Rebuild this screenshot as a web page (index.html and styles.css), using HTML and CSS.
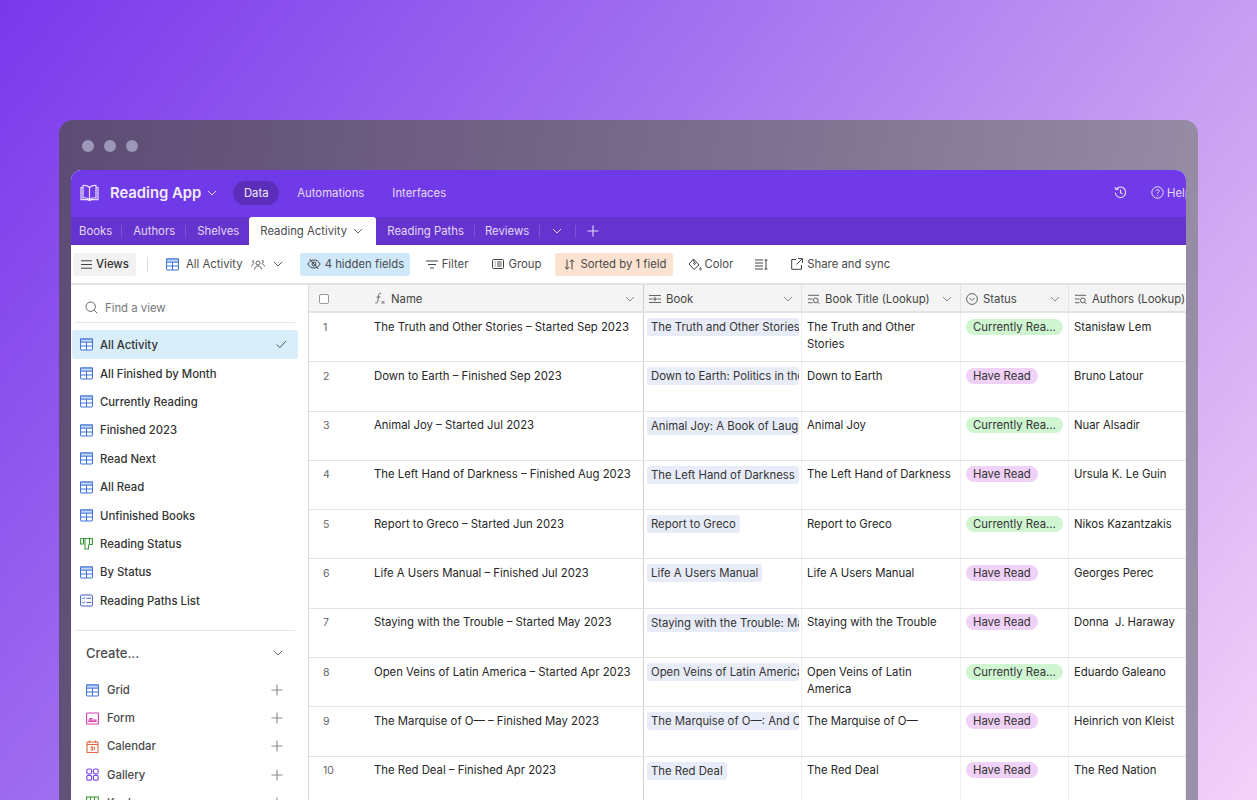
FILE: index.html
```html
<!DOCTYPE html>
<html lang="en">
<head>
<meta charset="utf-8">
<title>Reading App</title>
<link rel="stylesheet" href="styles.css">
</head>
<body>
<svg class="defs" width="0" height="0" aria-hidden="true">
  <symbol id="i-grid" viewBox="0 0 14 14"><rect x=".6" y="1.1" width="12.8" height="11.8" rx="1" fill="#fff" stroke="#3f73d9" stroke-width="1.1"/><rect x=".6" y="1.1" width="12.8" height="3.4" fill="#c3d6f7" stroke="#3f73d9" stroke-width="1.1"/><path d="M.6 8.6h12.8M7 4.5v8.4" stroke="#3f73d9" stroke-width="1.1" fill="none"/></symbol>
  <symbol id="i-chev" viewBox="0 0 10 10"><path d="M1 3l4 4 4-4" fill="none" stroke="currentColor" stroke-width="1"/></symbol>
  <symbol id="i-plus" viewBox="0 0 12 12"><path d="M6 .5v11M.5 6h11" fill="none" stroke="currentColor" stroke-width="1.1"/></symbol>
  <symbol id="i-lookup" viewBox="0 0 14 12"><path d="M1 2h12M1 6h5M1 10h5" fill="none" stroke="currentColor" stroke-width="1"/><circle cx="9.5" cy="7.5" r="2.6" fill="none" stroke="currentColor"/><path d="M11.4 9.4l1.8 1.8" stroke="currentColor"/></symbol>
</svg>
<main class="window">
  <div class="titlebar"><i class="dot"></i><i class="dot"></i><i class="dot"></i></div>
  <div class="app">
    <header class="topbar">
      <svg class="logo" width="19" height="18" viewBox="0 0 19 18" fill="none" stroke="#e9e0fb" stroke-width="1.2"><path d="M9.5 3.5C8 2 5.5 1.3 3 1.5v12.3c2.5-.2 5 .3 6.5 1.7 1.5-1.4 4-1.9 6.5-1.7V1.5C13.5 1.3 11 2 9.5 3.5zM9.5 3.5v12M3 3.5H1v12.2h6.5l2 1 2-1H18V3.5h-2"/></svg>
      <span class="brand">Reading App</span>
      <svg class="brand-chev" width="10" height="10"><use href="#i-chev"/></svg>
      <span class="nav nav-on">Data</span>
      <span class="nav nav-auto">Automations</span>
      <span class="nav nav-int">Interfaces</span>
      <span class="spring"></span>
      <svg class="hist" width="13" height="13" viewBox="0 0 13 13" fill="none" stroke="#e9e0fb" stroke-width="1.1"><path d="M2.3 3.2A5.2 5.2 0 1 1 1.3 6.5M.8 1.2l1.4 2.3 2.4-.8M6.5 3.5v3.2l2 1.3"/></svg>
      <svg class="help" width="13" height="13" viewBox="0 0 13 13" fill="none" stroke="#e9e0fb" stroke-width="1"><circle cx="6.5" cy="6.5" r="5.7"/><path d="M4.9 5.1c0-2.1 3.3-2.1 3.3-.1 0 1.3-1.7 1.3-1.7 2.8M6.5 9.1v.9"/></svg>
      <span class="help-t">Help</span>
    </header>
    <nav class="tabs">
      <span class="tab t-books">Books</span><i class="tsep"></i>
      <span class="tab t-auth">Authors</span><i class="tsep"></i>
      <span class="tab t-shelves">Shelves</span>
      <span class="tab-on">Reading Activity<svg class="tab-chev" width="10" height="10"><use href="#i-chev"/></svg></span>
      <span class="tab t-paths">Reading Paths</span><i class="tsep"></i>
      <span class="tab t-rev">Reviews</span><i class="tsep"></i>
      <svg class="tab-more" width="10" height="10"><use href="#i-chev"/></svg><i class="tsep"></i>
      <svg class="tab-plus" width="12" height="12"><use href="#i-plus"/></svg>
    </nav>
    <div class="toolbar">
      <span class="views"><svg width="11" height="9" viewBox="0 0 11 9" fill="none" stroke="#444" stroke-width="1"><path d="M0 .8h11M0 4.5h11M0 8.2h11"/></svg>Views</span>
      <i class="vsep"></i>
      <svg class="tb-grid" width="13" height="13"><use href="#i-grid"/></svg>
      <span class="tb allact">All Activity</span>
      <svg class="people" width="14" height="11" viewBox="0 0 14 11" fill="none" stroke="#555" stroke-width=".9"><circle cx="7" cy="4" r="2"/><path d="M3.5 10.5c.3-2.5 1.5-3.5 3.5-3.5s3.2 1 3.5 3.5M3 1.2a1.500 1.500 0 1 0 .5 3M11 1.2a1.500 1.500 0 1 1-.5 3M.5 7.500c.2-1.300.8-2 2-2.200M13.500 7.500c-.2-1.300-.8-2-2-2.200"/></svg>
      <svg class="all-chev" width="10" height="10"><use href="#i-chev"/></svg>
      <span class="chip chip-blue"><svg width="14" height="12" viewBox="0 0 14 12" fill="none" stroke="#444" stroke-width="1"><path d="M.8 6C2.5 3.2 4.6 2 7 2s4.5 1.2 6.2 4C11.5 8.8 9.4 10 7 10S2.5 8.8.8 6z"/><circle cx="7" cy="6" r="2"/><path d="M2.5 1l9 10"/></svg>4 hidden fields</span>
      <span class="tb tb-filter"><svg width="12" height="9" viewBox="0 0 12 9" fill="none" stroke="#444" stroke-width="1"><path d="M0 1h12M2 4.500h8M4 8h4"/></svg>Filter</span>
      <span class="tb tb-group"><svg width="12" height="10" viewBox="0 0 12 10" fill="none" stroke="#444" stroke-width="1"><rect x=".5" y=".5" width="11" height="9" rx="1"/><path d="M2.5 3h1M5 3h4.500M2.500 5h1M5 5h4.500M2.500 7h1M5 7h4.500"/></svg>Group</span>
      <span class="chip chip-orange"><svg width="11" height="11" viewBox="0 0 11 11" fill="none" stroke="#444" stroke-width="1"><path d="M3 .5v9.500M.8 8L3 10.200 5.200 8M8 10.500V1M5.800 3L8 .8 10.200 3"/></svg>Sorted by 1 field</span>
      <span class="tb tb-color"><svg width="14" height="13" viewBox="0 0 14 13" fill="none" stroke="#444" stroke-width="1"><path d="M5.5 1L1 6l5 5.500 5-4.500zM5 1.500l1.500 3"/><circle cx="6.5" cy="5.5" r=".9"/><path d="M12.5 9.5c.8 1 .8 2.500 0 2.500s-.8-1.500 0-2.500z"/></svg>Color</span>
      <svg class="tb-height" width="13" height="11" viewBox="0 0 13 11" fill="none" stroke="#444" stroke-width="1"><path d="M0 1h8M0 4h8M0 7h8M0 10h8M11 .5v10M9.500 1h3M9.500 10h3"/></svg>
      <span class="tb tb-share"><svg width="12" height="12" viewBox="0 0 12 12" fill="none" stroke="#444" stroke-width="1"><path d="M5 1.500H.7v9.800h9.800V7M7 .6h4.400V5M11.200.8L5.500 6.500"/></svg>Share and sync</span>
    </div>
    <div class="body">
      <aside class="sidebar">
        <div class="find"><svg width="13" height="13" viewBox="0 0 13 13" fill="none" stroke="#666" stroke-width="1"><circle cx="5.7" cy="5.7" r="4.7"/><path d="M9.2 9.2l3.2 3.2"/></svg>Find a view</div>
        <ul class="views-list">
          <li class="view view-on"><svg width="13" height="13"><use href="#i-grid"/></svg>All Activity<svg class="check" width="11" height="9" viewBox="0 0 11 9" fill="none" stroke="#555" stroke-width="1"><path d="M.8 4.5l3 3.2L10.200.8"/></svg></li>
          <li class="view"><svg width="13" height="13"><use href="#i-grid"/></svg>All Finished by Month</li>
          <li class="view"><svg width="13" height="13"><use href="#i-grid"/></svg>Currently Reading</li>
          <li class="view"><svg width="13" height="13"><use href="#i-grid"/></svg>Finished 2023</li>
          <li class="view"><svg width="13" height="13"><use href="#i-grid"/></svg>Read Next</li>
          <li class="view"><svg width="13" height="13"><use href="#i-grid"/></svg>All Read</li>
          <li class="view"><svg width="13" height="13"><use href="#i-grid"/></svg>Unfinished Books</li>
          <li class="view"><svg width="13" height="13" viewBox="0 0 13 13" fill="none" stroke="#3d9a3a" stroke-width="1.1"><path d="M.6 1.500h11.800v6H9.500v-6M.6 1.500v5.500h2.900v-5.500M3.500 1.500h6M5 1.500v10.500h3.500V7.500"/></svg>Reading Status</li>
          <li class="view"><svg width="13" height="13"><use href="#i-grid"/></svg>By Status</li>
          <li class="view"><svg width="13" height="13" viewBox="0 0 13 13" fill="none" stroke="#3f5fc9" stroke-width="1"><rect x=".6" y="1" width="11.8" height="11" rx="1"/><path d="M2.500 4l1 1 1.500-1.800M6.500 4.300h4.500M2.500 8.300l1 1L5 7.500M6.500 8.500h4.500"/></svg>Reading Paths List</li>
        </ul>
        <div class="create">
          <div class="create-h">Create...<svg width="10" height="10"><use href="#i-chev"/></svg></div>
          <ul class="create-list">
            <li class="cr"><svg width="13" height="13"><use href="#i-grid"/></svg>Grid<svg class="cr-plus" width="12" height="12"><use href="#i-plus"/></svg></li>
            <li class="cr"><svg width="13" height="13" viewBox="0 0 13 13" fill="none" stroke="#d53fb0" stroke-width="1.1"><rect x=".6" y="1" width="11.8" height="11" rx=".5"/><path d="M3 8h7v1.500H3zM4 8V6.500h2.500" fill="#f5b8e6"/></svg>Form<svg class="cr-plus" width="12" height="12"><use href="#i-plus"/></svg></li>
            <li class="cr"><svg width="13" height="13" viewBox="0 0 13 13" fill="none" stroke="#d9683a" stroke-width="1.1"><rect x="1" y="2" width="11" height="10.5" rx=".5"/><path d="M1 4.500h11M3.500.5v2.500M9.500.5v2.500M4.500 7h2v1h-1 1v2h-2M8.500 7v3"/></svg>Calendar<svg class="cr-plus" width="12" height="12"><use href="#i-plus"/></svg></li>
            <li class="cr"><svg width="13" height="13" viewBox="0 0 13 13" fill="none" stroke="#7c4be8" stroke-width="1.2"><rect x=".8" y="1" width="4.8" height="4.8" rx="1.5"/><rect x="7.4" y="1" width="4.8" height="4.8" rx="1.5"/><rect x=".8" y="7.4" width="4.8" height="4.8" rx="1.5"/><rect x="7.4" y="7.4" width="4.8" height="4.8" rx="1.5"/></svg>Gallery<svg class="cr-plus" width="12" height="12"><use href="#i-plus"/></svg></li>
            <li class="cr"><svg width="13" height="13" viewBox="0 0 13 13" fill="none" stroke="#3d9a3a" stroke-width="1.1"><rect x=".6" y="1" width="11.8" height="11"/><path d="M4.500 1v6M8.500 1v8"/></svg>Kanban<svg class="cr-plus" width="12" height="12"><use href="#i-plus"/></svg></li>
          </ul>
        </div>
      </aside>
      <section class="grid">
        <div class="g-head">
          <div class="h h-name"><i class="box"></i><svg class="fx" width="12" height="13" viewBox="0 0 12 13" fill="none" stroke="#555" stroke-width=".9"><path d="M7.500 1.500C6 1 5 1.800 4.800 3.500L4 9.500C3.800 11.200 2.800 12 1.300 11.500M2.800 5.300h4M8 9.500l3 3M11 9.500l-3 3" transform="scale(.95)"/></svg><span class="h-t">Name</span><svg class="h-chev" width="10" height="10"><use href="#i-chev"/></svg></div>
          <div class="h"><svg width="12" height="12" viewBox="0 0 12 12" fill="none" stroke="#555" stroke-width=".9"><path d="M0 2.500h12M0 6h3.500M8.500 6H12M6 3.800v4.400M3.800 6h4.400M0 9.500h12"/></svg><span class="h-t">Book</span><svg class="h-chev" width="10" height="10"><use href="#i-chev"/></svg></div>
          <div class="h"><svg width="13" height="12"><use href="#i-lookup"/></svg><span class="h-t">Book Title (Lookup)</span><svg class="h-chev" width="10" height="10"><use href="#i-chev"/></svg></div>
          <div class="h"><svg width="12" height="12" viewBox="0 0 12 12" fill="none" stroke="#555" stroke-width=".9"><circle cx="6" cy="6" r="5.4"/><path d="M3.500 5l2.500 2.500L8.500 5"/></svg><span class="h-t">Status</span><svg class="h-chev" width="10" height="10"><use href="#i-chev"/></svg></div>
          <div class="h h-last"><svg width="13" height="12"><use href="#i-lookup"/></svg><span class="h-t">Authors (Lookup)</span></div>
        </div>
        <div class="g-row"><div class="c c-name"><span class="num">1</span><span>The Truth and Other Stories – Started Sep 2023</span></div><div class="c"><span class="link">The Truth and Other Stories: Selected</span></div><div class="c c-text">The Truth and Other Stories</div><div class="c"><span class="pill green">Currently Reading</span></div><div class="c c-text">Stanisław Lem</div></div>
        <div class="g-row"><div class="c c-name"><span class="num">2</span><span>Down to Earth – Finished Sep 2023</span></div><div class="c"><span class="link">Down to Earth: Politics in the New</span></div><div class="c c-text">Down to Earth</div><div class="c"><span class="pill pink">Have Read</span></div><div class="c c-text">Bruno Latour</div></div>
        <div class="g-row"><div class="c c-name"><span class="num">3</span><span>Animal Joy – Started Jul 2023</span></div><div class="c"><span class="link">Animal Joy: A Book of Laughter</span></div><div class="c c-text">Animal Joy</div><div class="c"><span class="pill green">Currently Reading</span></div><div class="c c-text">Nuar Alsadir</div></div>
        <div class="g-row"><div class="c c-name"><span class="num">4</span><span>The Left Hand of Darkness – Finished Aug 2023</span></div><div class="c"><span class="link">The Left Hand of Darkness</span></div><div class="c c-text">The Left Hand of Darkness</div><div class="c"><span class="pill pink">Have Read</span></div><div class="c c-text">Ursula K. Le Guin</div></div>
        <div class="g-row"><div class="c c-name"><span class="num">5</span><span>Report to Greco – Started Jun 2023</span></div><div class="c"><span class="link">Report to Greco</span></div><div class="c c-text">Report to Greco</div><div class="c"><span class="pill green">Currently Reading</span></div><div class="c c-text">Nikos Kazantzakis</div></div>
        <div class="g-row"><div class="c c-name"><span class="num">6</span><span>Life A Users Manual – Finished Jul 2023</span></div><div class="c"><span class="link">Life A Users Manual</span></div><div class="c c-text">Life A Users Manual</div><div class="c"><span class="pill pink">Have Read</span></div><div class="c c-text">Georges Perec</div></div>
        <div class="g-row"><div class="c c-name"><span class="num">7</span><span>Staying with the Trouble – Started May 2023</span></div><div class="c"><span class="link">Staying with the Trouble: Making Kin</span></div><div class="c c-text">Staying with the Trouble</div><div class="c"><span class="pill pink">Have Read</span></div><div class="c c-text">Donna&nbsp; J. Haraway</div></div>
        <div class="g-row"><div class="c c-name"><span class="num">8</span><span>Open Veins of Latin America – Started Apr 2023</span></div><div class="c"><span class="link">Open Veins of Latin America: Five</span></div><div class="c c-text">Open Veins of Latin America</div><div class="c"><span class="pill green">Currently Reading</span></div><div class="c c-text">Eduardo Galeano</div></div>
        <div class="g-row"><div class="c c-name"><span class="num">9</span><span>The Marquise of O— – Finished May 2023</span></div><div class="c"><span class="link">The Marquise of O—: And Other Stories</span></div><div class="c c-text">The Marquise of O—</div><div class="c"><span class="pill pink">Have Read</span></div><div class="c c-text">Heinrich von Kleist</div></div>
        <div class="g-row"><div class="c c-name"><span class="num">10</span><span>The Red Deal – Finished Apr 2023</span></div><div class="c"><span class="link">The Red Deal</span></div><div class="c c-text">The Red Deal</div><div class="c"><span class="pill pink">Have Read</span></div><div class="c c-text">The Red Nation</div></div>
      </section>
    </div>
  </div>
</main>
</body>
</html>
```
FILE: styles.css
```css
* { box-sizing: border-box; }
html, body { margin: 0; height: 800px; overflow: hidden; }
body {
  padding: 120px 59px 0;
  font-family: Inter, "Liberation Sans", sans-serif;
  font-size: 11.33px;
  color: #333;
  background: linear-gradient(128deg, #7a38ec 0%, #a474f0 40%, #c9a2f2 70%, #f4d2f9 100%);
}
.defs { position: absolute; }
ul { list-style: none; margin: 0; padding: 0; }
i { display: block; font-style: normal; }
svg { flex: none; display: block; }

.window {
  width: 1139px;
  height: 680px;
  padding: 0 12px;
  border-radius: 14px 14px 0 0;
  background: linear-gradient(100deg, #5c4b74 0%, #7a6c8c 50%, #9b92a9 100%);
  overflow: hidden;
}
.titlebar { height: 50px; display: flex; align-items: center; gap: 10px; padding: 2px 0 0 11px; }
.dot { width: 12px; height: 12px; border-radius: 50%; background: #9a97b8; }

.app { width: 1115px; height: 630px; background: #fff; border-radius: 10px 10px 0 0; overflow: hidden; }

.topbar { height: 47px; background: #713ae8; color: #efe8fd; display: flex; align-items: center; padding: 0 0 2px 9px; white-space: nowrap; }
.brand { margin-left: 11px; font-size: 14.8px; font-weight: 600; color: #f2edfd; }
.brand-chev { margin-left: 6px; color: #e4d9fa; }
.nav { color: #e6dcfb; }
.nav-on { margin-left: 16px; width: 46px; height: 24px; line-height: 24px; text-align: center; border-radius: 12px; background: #5a2eb9; color: #f0eafd; }
.nav-auto { margin-left: 18px; }
.nav-int { margin-left: 28px; }
.spring { flex: 1; }
.hist { margin-right: 24px; }
.help { margin-right: 3px; }
.help-t { width: 19px; overflow: hidden; flex: none; color: #e6dcfb; }

.tabs { height: 28px; background: #6534cf; color: #e3d8fa; display: flex; align-items: center; border-bottom: 1px solid #5e30c4; padding-left: 8px; white-space: nowrap; }
.tsep { width: 1px; height: 12px; background: #7d55d8; }
.t-books { margin-right: 9px; }
.t-auth { margin: 0 10px 0 11px; }
.t-shelves { margin: 0 10px 0 11px; }
.tab-on { align-self: stretch; height: 28px; width: 127px; background: #fff; color: #4b4b4b; border-radius: 3px 3px 0 0; display: flex; align-items: center; padding-left: 11px; }
.tab-chev { margin-left: 6px; color: #666; }
.t-paths { margin: 0 10px 0 11px; }
.t-rev { margin: 0 10px; }
.tab-more { margin: 0 13px 0 12px; }
.tab-plus { margin-left: 11px; }

.toolbar { height: 40px; display: flex; align-items: center; padding-left: 2px; border-bottom: 2px solid #e3e3e3; color: #4a4a4a; white-space: nowrap; }
.tb { display: flex; align-items: center; gap: 4px; }
.views { width: 63px; height: 23px; background: #f2f2f2; border-radius: 3px; display: flex; align-items: center; gap: 4px; padding-left: 8px; color: #333; font-weight: 500; }
.vsep { width: 1px; height: 15px; background: #ddd; margin-left: 11px; }
.tb-grid { margin-left: 18px; }
.allact { margin-left: 7px; }
.people { margin-left: 8px; }
.all-chev { margin-left: 8px; color: #555; }
.chip { height: 23px; border-radius: 3px; display: flex; align-items: center; padding-left: 7px; }
.chip-blue { margin-left: 17px; width: 110px; gap: 4px; background: #cfe9fb; }
.tb-filter { margin-left: 16px; }
.tb-group { margin-left: 24px; }
.chip-orange { margin-left: 14px; width: 118px; gap: 5px; padding-left: 9px; background: #fbe2d1; }
.tb-color { margin-left: 15px; gap: 2px; }
.tb-height { margin-left: 22px; }
.tb-share { margin-left: 23px; }

.body { display: flex; height: 515px; }
.sidebar { width: 238px; flex: none; padding: 0 10px 0 1px; border-right: 1px solid #d9d9d9; white-space: nowrap; font-weight: 500; }
.find { height: 38px; margin: 0 3px; display: flex; align-items: center; gap: 7px; padding: 8px 0 0 10px; color: #777; border-bottom: 1px solid #e5e5e5; font-weight: 400; }
.views-list { padding: 7px 0 15px; width: 226px; }
.view { height: 28.4px; display: flex; align-items: center; gap: 7px; padding-left: 8px; border-radius: 3px; }
.view-on { height: 29px; margin-bottom: .4px; background: #d9eefb; }
.check { margin-left: auto; margin-right: 11px; }
.create { margin: 0 3px; width: 220px; padding: 0 12px 0 11px; border-top: 1px solid #e5e5e5; }
.create-h { height: 44px; display: flex; align-items: center; justify-content: space-between; font-size: 13px; color: #4a4a4a; }
.create-h svg { color: #666; }
.create-list { padding-top: 1px; }
.cr { height: 28.2px; display: flex; align-items: center; gap: 8px; color: #4a4a4a; }
.cr-plus { margin-left: auto; color: #8a8a8a; }

.grid { flex: 1; min-width: 0; overflow: hidden; }
.g-head, .g-row { display: grid; grid-template-columns: 335px 158px 159px 108px 117px; }
.g-head { height: 28px; background: #f4f4f4; border-bottom: 2px solid #e3e3e3; }
.h { display: flex; align-items: center; gap: 5px; padding: 1px 8px 0 5px; border-right: 1px solid #e3e3e3; white-space: nowrap; min-width: 0; color: #444; }
.h svg { color: #555; }
.h-name { border-right-color: #cfcfcf; padding-left: 10px; }
.box { width: 10px; height: 10px; border: 1px solid #999; border-radius: 2px; background: #fff; margin-right: 40px; flex: none; }
.h-t { flex: 1; overflow: hidden; }
.h-chev { color: #8a8a8a !important; }
.h-last { border: 0; padding-right: 0; }

.g-row { height: 49.3px; border-bottom: 1px solid #e3e3e3; color: #262626; }
.c { border-right: 1px solid #efefef; padding: 5px 3px; overflow: hidden; min-width: 0; line-height: 17px; }
.c-name { display: flex; border-right-color: #cfcfcf; padding: 5.5px 3px 0 14px; white-space: nowrap; }
.num { width: 51px; flex: none; color: #666; font-size: 10.5px; }
.c-text { padding: 5.5px 5px; }
.link { display: inline-block; height: 18px; line-height: 18px; max-width: 152px; background: #e8ecf8; padding: 0 4px; border-radius: 3px; white-space: nowrap; overflow: hidden; vertical-align: top; color: #333; }
.pill { display: inline-block; max-width: 97px; height: 16px; line-height: 16px; margin: .5px 0 0 2px; padding: 0 7px; border-radius: 8px; white-space: nowrap; overflow: hidden; text-overflow: ellipsis; vertical-align: top; color: #333; }
.green { background: #cff5d1; width: 97px; }
.pink { background: #f0d1f7; }
```
